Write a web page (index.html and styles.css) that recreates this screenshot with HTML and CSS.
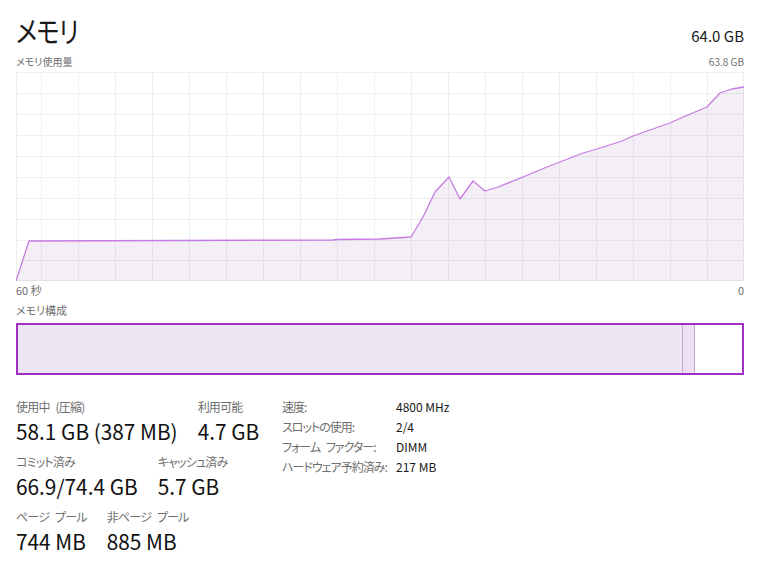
FILE: index.html
```html
<!DOCTYPE html>
<html lang="ja">
<head>
  <meta charset="utf-8">
  <title>メモリ</title>
  <link rel="stylesheet" href="styles.css">
</head>
<body>
  <div class="page">
    <div class="header">
      <h1 class="title">メモリ</h1>
      <div class="total">64.0 GB</div>
    </div>

    <div class="caption-row">
      <span>メモリ使用量</span>
      <span>63.8 GB</span>
    </div>

    <!-- usage graph, drawn in page coordinates -->
    <svg class="graph" width="728" height="209" viewBox="16 72 728 209">
      <rect x="16" y="72" width="728" height="209" fill="#ffffff"/>
      <g stroke="#efefef" stroke-width="1">
        <line x1="41.5" y1="72" x2="41.5" y2="281"/>
        <line x1="78.5" y1="72" x2="78.5" y2="281"/>
        <line x1="115.5" y1="72" x2="115.5" y2="281"/>
        <line x1="152.5" y1="72" x2="152.5" y2="281"/>
        <line x1="189.5" y1="72" x2="189.5" y2="281"/>
        <line x1="226.5" y1="72" x2="226.5" y2="281"/>
        <line x1="263.5" y1="72" x2="263.5" y2="281"/>
        <line x1="300.5" y1="72" x2="300.5" y2="281"/>
        <line x1="337.5" y1="72" x2="337.5" y2="281"/>
        <line x1="374.5" y1="72" x2="374.5" y2="281"/>
        <line x1="411.5" y1="72" x2="411.5" y2="281"/>
        <line x1="448.5" y1="72" x2="448.5" y2="281"/>
        <line x1="485.5" y1="72" x2="485.5" y2="281"/>
        <line x1="522.5" y1="72" x2="522.5" y2="281"/>
        <line x1="559.5" y1="72" x2="559.5" y2="281"/>
        <line x1="596.5" y1="72" x2="596.5" y2="281"/>
        <line x1="633.5" y1="72" x2="633.5" y2="281"/>
        <line x1="670.5" y1="72" x2="670.5" y2="281"/>
        <line x1="707.5" y1="72" x2="707.5" y2="281"/>
        <line x1="16" y1="93.5" x2="744" y2="93.5"/>
        <line x1="16" y1="114.5" x2="744" y2="114.5"/>
        <line x1="16" y1="135.5" x2="744" y2="135.5"/>
        <line x1="16" y1="156.5" x2="744" y2="156.5"/>
        <line x1="16" y1="177.5" x2="744" y2="177.5"/>
        <line x1="16" y1="198.5" x2="744" y2="198.5"/>
        <line x1="16" y1="219.5" x2="744" y2="219.5"/>
        <line x1="16" y1="240.5" x2="744" y2="240.5"/>
        <line x1="16" y1="260.5" x2="744" y2="260.5"/>
      </g>
      <rect x="16.5" y="72.5" width="727" height="208" fill="none" stroke="#efefef"/>
      <path d="M16 281 L29 241 L333 240 L337 239.5 L380 239 L411 237 L423 217 L435 192 L449 177 L460 199 L473 181 L485 191 L498 187 L523 177 L547 167 L560 162 L583 153 L597 149 L622 141 L633 136 L647 131 L670 123 L683 117 L707 107 L720 93 L732 89 L744 87 L744 281 Z"
            fill="#6a2c85" fill-opacity="0.075" stroke="none"/>
      <polyline points="16,281 29,241 333,240 337,239.5 380,239 411,237 423,217 435,192 449,177 460,199 473,181 485,191 498,187 523,177 547,167 560,162 583,153 597,149 622,141 633,136 647,131 670,123 683,117 707,107 720,93 732,89 744,87"
                fill="none" stroke="#c67be2" stroke-width="1.3" stroke-linejoin="round"/>
    </svg>

    <div class="caption-row axis">
      <span>60 秒</span>
      <span>0</span>
    </div>

    <div class="caption">メモリ構成</div>
    <div class="composition">
      <div class="seg in-use" style="width: 664px"></div>
      <div class="seg modified" style="width: 11px"></div>
      <div class="seg free"></div>
    </div>

    <div class="details">
      <div class="stats">
        <div class="stat-row">
          <div class="stat">
            <div class="stat-label">使用中 (圧縮)</div>
            <div class="stat-value">58.1 GB (387 MB)</div>
          </div>
          <div class="stat">
            <div class="stat-label">利用可能</div>
            <div class="stat-value">4.7 GB</div>
          </div>
        </div>
        <div class="stat-row">
          <div class="stat">
            <div class="stat-label">コミット済み</div>
            <div class="stat-value">66.9/74.4 GB</div>
          </div>
          <div class="stat">
            <div class="stat-label">キャッシュ済み</div>
            <div class="stat-value">5.7 GB</div>
          </div>
        </div>
        <div class="stat-row">
          <div class="stat">
            <div class="stat-label">ページ プール</div>
            <div class="stat-value">744 MB</div>
          </div>
          <div class="stat">
            <div class="stat-label">非ページ プール</div>
            <div class="stat-value">885 MB</div>
          </div>
        </div>
      </div>

      <dl class="specs">
        <dt>速度:</dt><dd>4800 MHz</dd>
        <dt>スロットの使用:</dt><dd>2/4</dd>
        <dt>フォーム ファクター:</dt><dd>DIMM</dd>
        <dt>ハードウェア予約済み:</dt><dd>217 MB</dd>
      </dl>
    </div>
  </div>
</body>
</html>
```

FILE: styles.css
```css
body {
  margin: 0;
  background: #ffffff;
  color: #1a1a1a;
  font-family: "Noto Sans CJK JP", "Noto Sans", sans-serif;
  font-feature-settings: "palt" 1;
}

.page {
  padding: 10px 16px 0 16px;
}

.header {
  display: flex;
  justify-content: space-between;
  align-items: flex-end;
  height: 40px;
}

.title {
  margin: 0;
  font-size: 29px;
  font-weight: normal;
  line-height: 40px;
  letter-spacing: -1px;
  transform: scaleX(0.84);
  transform-origin: left center;
}

.total {
  font-size: 15px;
  line-height: 20px;
  margin-bottom: 4px;
}

.caption-row {
  display: flex;
  justify-content: space-between;
  font-size: 10px;
  line-height: 14px;
  color: #6e6e6e;
  margin-top: 5px;
  margin-bottom: 3px;
}

.caption-row.axis {
  margin-top: 2px;
  margin-bottom: 0;
  font-size: 11px;
}

.graph {
  display: block;
}

.caption {
  font-size: 11px;
  line-height: 14px;
  color: #6e6e6e;
  margin-top: 6px;
  margin-bottom: 6px;
}

.composition {
  display: flex;
  height: 48px;
  border: 2px solid #a12fc3;
}

.seg {
  height: 100%;
}

.in-use {
  background: #ede5f3;
  border-right: 1px solid #c9a6da;
}

.modified {
  background: #ece1f2;
  border-right: 1px solid #c9a6da;
}

.free {
  flex: 1;
  background: #ffffff;
}

.details {
  display: flex;
  margin-top: 24px;
}

.stats {
  width: 266px;
}

.stat-row {
  display: flex;
  gap: 20px;
  margin-bottom: 7px;
}

.stat-label {
  font-size: 12px;
  line-height: 16px;
  color: #6e6e6e;
  letter-spacing: -0.8px;
  word-spacing: 4px;
  white-space: nowrap;
}

.stat-value {
  font-size: 20.8px;
  line-height: 32px;
  color: #111111;
  white-space: nowrap;
}

.specs {
  display: grid;
  grid-template-columns: 114px auto;
  grid-auto-rows: 20px;
  margin: 0;
  font-size: 12px;
  line-height: 16px;
}

.specs dt {
  color: #6e6e6e;
  letter-spacing: -1px;
  word-spacing: 4px;
  white-space: nowrap;
}

.specs dd {
  margin: 0;
  color: #1a1a1a;
}
```
